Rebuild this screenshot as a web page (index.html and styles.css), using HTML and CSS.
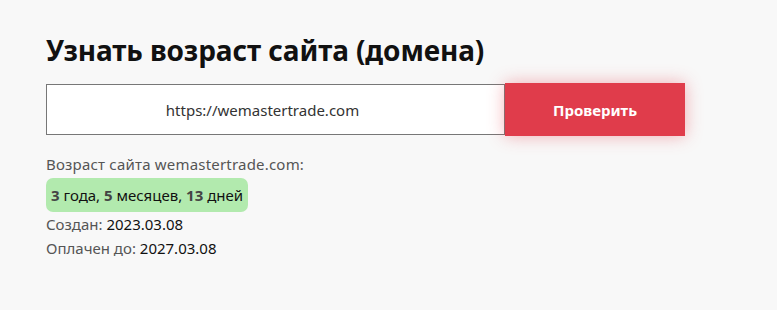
FILE: index.html
```html
<!DOCTYPE html>
<html lang="ru">
  <head>
    <meta charset="UTF-8" />
    <meta name="viewport" content="width=device-width, initial-scale=1.0" />
    <title>Узнать возраст сайта</title>
    <link rel="stylesheet" href="styles.css">
  </head>

  <body>
    <div class="page">
      <h1>Узнать возраст сайта (домена)</h1>

      <!-- Domain form -->
      <form class="check-form" onsubmit="return false">
        <input type="text" class="domain-input" value="https://wemastertrade.com" />
        <button type="submit" class="check-btn">Проверить</button>
      </form>

      <!-- Result -->
      <div class="result">
        <div class="result-label">Возраст сайта wemastertrade.com:</div>
        <div class="age-badge"><b>3</b> года, <b>5</b> месяцев, <b>13</b> дней</div>
        <div class="result-line">Создан: <span>2023.03.08</span></div>
        <div class="result-line">Оплачен до: <span>2027.03.08</span></div>
      </div>
    </div>
  </body>
</html>
```

FILE: styles.css
```css
body {
  margin: 0;
  background-color: #f8f8f8;
  font-family: "Noto Sans", "DejaVu Sans", sans-serif;
  color: #111;
}

.page {
  padding: 28px 46px;
}

h1 {
  margin: 0 0 11px 0;
  font-size: 28px;
  font-weight: 700;
  line-height: 44px;
  letter-spacing: -0.1px;
}

.check-form {
  display: flex;
  align-items: center;
  width: 639px;
}

.domain-input {
  box-sizing: border-box;
  width: 459px;
  height: 51px;
  border: 1px solid #777;
  background: #fff;
  font-family: inherit;
  font-size: 15px;
  color: #333;
  text-align: center;
  padding: 0 36px 0 10px;
  outline: none;
}

.check-btn {
  width: 180px;
  height: 53px;
  border: none;
  background-color: #e03c4b;
  color: #fff;
  font-family: inherit;
  font-size: 15px;
  font-weight: 700;
  box-shadow: 0 0 16px rgba(232, 60, 75, 0.4);
  cursor: pointer;
}

.result {
  margin-top: 16px;
  font-size: 15px;
}

.result-label {
  color: #555;
  line-height: 24px;
  letter-spacing: 0.2px;
}

.age-badge {
  display: inline-block;
  margin-top: 2px;
  padding: 0 5px;
  line-height: 34px;
  background-color: #b2eaae;
  border-radius: 7px;
  color: #111;
}

.age-badge b {
  color: #444;
}

.result-line {
  color: #555;
  line-height: 24px;
}

.result-line span {
  color: #111;
}
```
